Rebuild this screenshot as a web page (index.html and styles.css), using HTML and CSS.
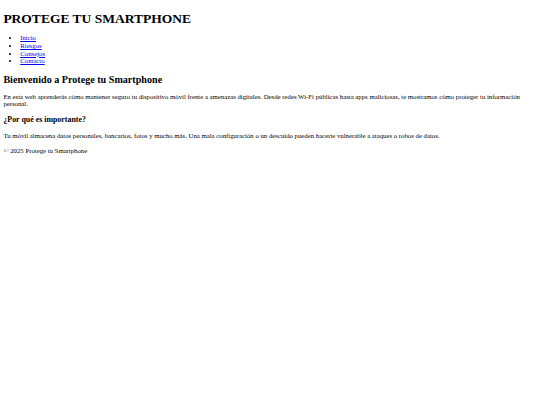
FILE: index.html
```html
<!DOCTYPE html>
<html lang="es">
<head>
<meta charset="utf-8">
<title>Protege tu Smartphone</title>
<link rel="stylesheet" href="styles.css">
</head>
<body class="page">
<header class="site-header">
  <h1 class="site-title">PROTEGE TU SMARTPHONE</h1>
  <nav class="site-nav">
    <ul class="nav-list">
      <li class="nav-item"><a class="nav-link" href="#">Inicio</a></li>
      <li class="nav-item"><a class="nav-link" href="#">Riesgos</a></li>
      <li class="nav-item"><a class="nav-link" href="#">Consejos</a></li>
      <li class="nav-item"><a class="nav-link" href="#">Contacto</a></li>
    </ul>
  </nav>
</header>
<main class="content">
  <section class="intro">
    <h2 class="section-title">Bienvenido a Protege tu Smartphone</h2>
    <p class="text">En esta web aprenderás cómo mantener seguro tu dispositivo móvil frente a amenazas digitales. Desde redes Wi-Fi públicas hasta apps maliciosas, te mostramos cómo proteger tu información personal.</p>
  </section>
  <section class="why">
    <h3 class="sub-title">¿Por qué es importante?</h3>
    <p class="text">Tu móvil almacena datos personales, bancarios, fotos y mucho más. Una mala configuración o un descuido pueden hacerte vulnerable a ataques o robos de datos.</p>
  </section>
</main>
<footer class="site-footer">
  <p class="text footer-text">© 2025 Protege tu Smartphone</p>
</footer>
</body>
</html>
```

FILE: styles.css
```css
html {
  background: #ffffff;
}
.page {
  margin: 3.375px;
  font-family: "Liberation Serif", "Times New Roman", serif;
  font-size: 6.75px;
  line-height: 7px;
  color: #000000;
}
.site-title {
  font-size: 13.5px;
  line-height: 16px;
  font-weight: bold;
  margin: 7.8px 0 7.25px;
}
.nav-list {
  margin: 6.75px 0;
  padding-left: 16.875px;
}
.nav-item {
  line-height: 7.67px;
}
.nav-link {
  color: #0000ee;
  text-decoration: underline;
}
.section-title {
  font-size: 10.125px;
  line-height: 11px;
  font-weight: bold;
  margin: 8.4px 0;
}
.sub-title {
  font-size: 7.9px;
  line-height: 9px;
  font-weight: bold;
  margin: 7.9px 0;
}
.text {
  margin: 6.75px 0;
}
.footer-text {
  margin-top: 8.5px;
}
```
